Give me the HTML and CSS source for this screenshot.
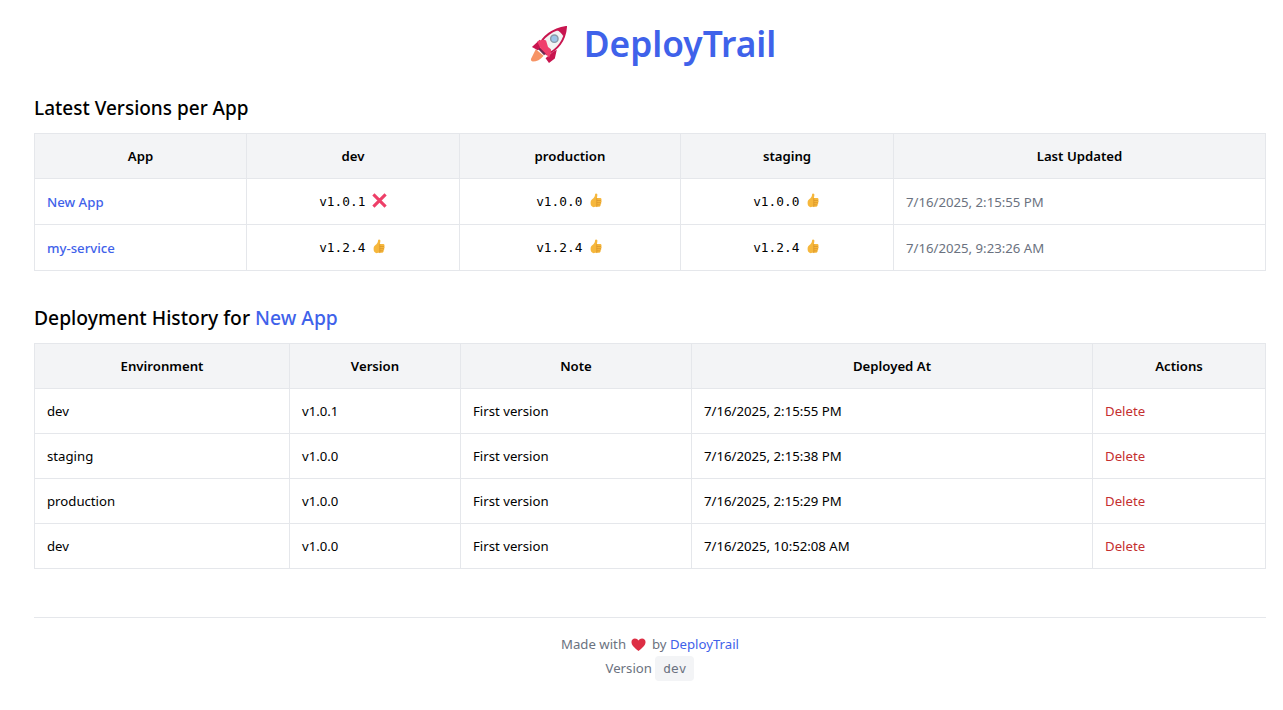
FILE: index.html
```html
<!DOCTYPE html>
<html>
<head>
  <title>DeployTrail</title>
  <link rel="stylesheet" href="styles.css">
</head>
<body>
  <svg width="0" height="0" class="defs">
    <defs>
      <symbol id="thumb" viewBox="0 0 16 16">
        <path fill="#f6b73c" d="M7.600 .4c1 0 1.500 .8 1.300 1.900L8.500 5.200h3.300c.9 0 1.600 .6 1.600 1.400 0 .5-.2 .9-.5 1.100 .4 .3 .6 .7 .6 1.200 0 .6-.3 1-.8 1.300 .2 .3 .3 .6 .3 .9 0 .6-.4 1.100-.9 1.300 .1 .2 .2 .5 .2 .7 0 1-.8 1.600-1.800 1.600H6.500C4.800 15.600 3.600 15 3 14.200 2.200 13.600 1.700 12.500 1.700 10.500 1.700 8.700 2.400 7.500 3.700 6.500 5.200 5.300 6.200 3.800 6.400 2 6.500 1 6.900 .4 7.600 .4Z"/>
        <path fill="none" stroke="#d9952a" stroke-width=".8" d="M8.300 8h4.700M8.300 10.300h4.700M8.300 12.600h3.700M8.300 5.500v9.500"/>
      </symbol>
    </defs>
  </svg>

  <h1 class="brand">
    <svg class="rocket" viewBox="0 0 38 38">
      <path fill="#f79465" d="M6 24 1 34c-.3 1.500 .6 2.500 2 2.500 3.500 0 8-2 11-6Z"/>
      <path fill="#c8154f" d="M10 14 2 21.500 8 25l7-5ZM23 27l-7 6 3.500 5 6-4.500 2-9Z"/>
      <path fill="#f2f2f2" stroke="#c8154f" stroke-width="2" d="M9 22C12 11 24 3 37 1c-1 14-9 24-20 28Z"/>
      <path fill="#c8154f" d="M27 4C30.500 2.500 34 1.400 37 1c-.4 3-1.200 6.500-2.700 9.800C33 8 30.500 5 27 4Z"/>
      <circle cx="25" cy="13" r="3.800" fill="#9cc4e8" stroke="#8b9ba8" stroke-width="1.500"/>
      <path fill="#f03f6c" d="M7.500 16C10.500 14.500 14 14 16.500 15l2 6.500 3 2.500c.5 2.500-.5 6-2 8.500-2-2.500-4-5-6.500-7.500L11 23C9.500 21 8.500 18.500 7.500 16Z"/>
      <path fill="#6d2a50" d="M8.500 24l6 6 1.500-1.500-6-6Z"/>
    </svg>
    <span>DeployTrail</span>
  </h1>

  <section class="block">
    <h2>Latest Versions per App</h2>
    <table class="grid latest">
      <colgroup>
        <col class="c-212"><col class="c-213"><col class="c-221"><col class="c-213"><col>
      </colgroup>
      <thead>
        <tr><th>App</th><th>dev</th><th>production</th><th>staging</th><th>Last Updated</th></tr>
      </thead>
      <tbody>
        <tr>
          <td><a class="app" href="#">New App</a></td>
          <td class="ver"><code>v1.0.1</code>
            <svg class="mark" viewBox="0 0 16 16"><path fill="none" stroke="#ee3f68" stroke-width="3.300" d="M1.500 1.500l13 13M14.500 1.500l-13 13"/></svg></td>
          <td class="ver"><code>v1.0.0</code> <svg class="mark"><use href="#thumb"/></svg></td>
          <td class="ver"><code>v1.0.0</code> <svg class="mark"><use href="#thumb"/></svg></td>
          <td class="when">7/16/2025, 2:15:55 PM</td>
        </tr>
        <tr>
          <td><a class="app" href="#">my-service</a></td>
          <td class="ver"><code>v1.2.4</code> <svg class="mark"><use href="#thumb"/></svg></td>
          <td class="ver"><code>v1.2.4</code> <svg class="mark"><use href="#thumb"/></svg></td>
          <td class="ver"><code>v1.2.4</code> <svg class="mark"><use href="#thumb"/></svg></td>
          <td class="when">7/16/2025, 9:23:26 AM</td>
        </tr>
      </tbody>
    </table>
  </section>

  <section class="block">
    <h2>Deployment History for <span class="accent">New App</span></h2>
    <table class="grid history">
      <colgroup>
        <col class="c-255"><col class="c-171"><col class="c-231"><col class="c-401"><col>
      </colgroup>
      <thead>
        <tr><th>Environment</th><th>Version</th><th>Note</th><th>Deployed At</th><th>Actions</th></tr>
      </thead>
      <tbody>
        <tr><td>dev</td><td>v1.0.1</td><td>First version</td><td>7/16/2025, 2:15:55 PM</td><td><a class="del" href="#">Delete</a></td></tr>
        <tr><td>staging</td><td>v1.0.0</td><td>First version</td><td>7/16/2025, 2:15:38 PM</td><td><a class="del" href="#">Delete</a></td></tr>
        <tr><td>production</td><td>v1.0.0</td><td>First version</td><td>7/16/2025, 2:15:29 PM</td><td><a class="del" href="#">Delete</a></td></tr>
        <tr><td>dev</td><td>v1.0.0</td><td>First version</td><td>7/16/2025, 10:52:08 AM</td><td><a class="del" href="#">Delete</a></td></tr>
      </tbody>
    </table>
  </section>

  <footer class="foot">
    <div>Made with
      <svg class="heart" viewBox="0 0 16 16"><path fill="#dd2e44" d="M8 15C3 11 .5 8.500 .5 5.300 .5 3 2.200 1.500 4.200 1.500 5.800 1.500 7.200 2.300 8 3.800 8.800 2.300 10.200 1.500 11.800 1.500 13.800 1.500 15.500 3 15.500 5.300 15.500 8.500 13 11 8 15Z"/></svg>
      by <a href="#">DeployTrail</a></div>
    <div class="version">Version <code>dev</code></div>
  </footer>
</body>
</html>
```

FILE: styles.css
```css
html {
  overflow-x: hidden;
}
body {
  margin: 0;
  padding: 0 17px 0 34px;
  font-family: 'Noto Sans', sans-serif;
  font-size: 13.2px;
  line-height: 20px;
  color: #000;
  background: #fff;
}
a {
  text-decoration: none;
}
.defs {
  display: block;
  height: 0;
}
.brand {
  display: flex;
  justify-content: center;
  align-items: center;
  gap: 17px;
  height: 48px;
  margin: 19px 0 0;
  padding-left: 6px;
  font-size: 35.300px;
  font-weight: 600;
  line-height: 46px;
  color: #3f62ea;
}
.rocket {
  width: 37px;
  height: 37px;
  margin-top: 2px;
}
.block {
  margin-top: 29px;
}
.block + .block {
  margin-top: 34px;
}
h2 {
  margin: 0 0 12px;
  font-size: 19px;
  font-weight: 500;
  line-height: 25px;
}
.block + .block h2 {
  margin-bottom: 13px;
  font-size: 19.300px;
}
.accent {
  color: #3f62ea;
}
.grid {
  width: 100%;
  table-layout: fixed;
  border-collapse: collapse;
}
.grid th, .grid td {
  border: 1px solid #e5e7eb;
  padding: 0 12px;
  height: 45px;
  box-sizing: border-box;
}
.grid th {
  background: #f3f4f6;
  font-weight: 600;
  text-align: center;
}
.c-212 { width: 212px; }
.c-213 { width: 213px; }
.c-221 { width: 221px; }
.c-255 { width: 255px; }
.c-171 { width: 171px; }
.c-231 { width: 231px; }
.c-401 { width: 401px; }
.latest td {
  height: 46px;
}
.app {
  color: #3f62ea;
  font-weight: 500;
}
.ver {
  text-align: center;
}
code {
  font-family: 'DejaVu Sans Mono', monospace;
  font-size: 12.800px;
}
.mark {
  width: 15px;
  height: 15px;
  vertical-align: -2px;
  margin-left: 3px;
}
.when {
  color: #6b7280;
}
.del {
  color: #c53030;
}
.foot {
  margin-top: 48px;
  padding-top: 15px;
  border-top: 1px solid #e5e7eb;
  text-align: center;
  color: #6b7280;
  line-height: 23px;
}
.foot a {
  color: #3f62ea;
}
.heart {
  width: 15px;
  height: 15px;
  vertical-align: -3px;
  margin: 0 2px;
}
.version code {
  display: inline-block;
  padding: 0 8px;
  border-radius: 4px;
  background: #f3f4f6;
  line-height: 25px;
  vertical-align: 0;
}
```
